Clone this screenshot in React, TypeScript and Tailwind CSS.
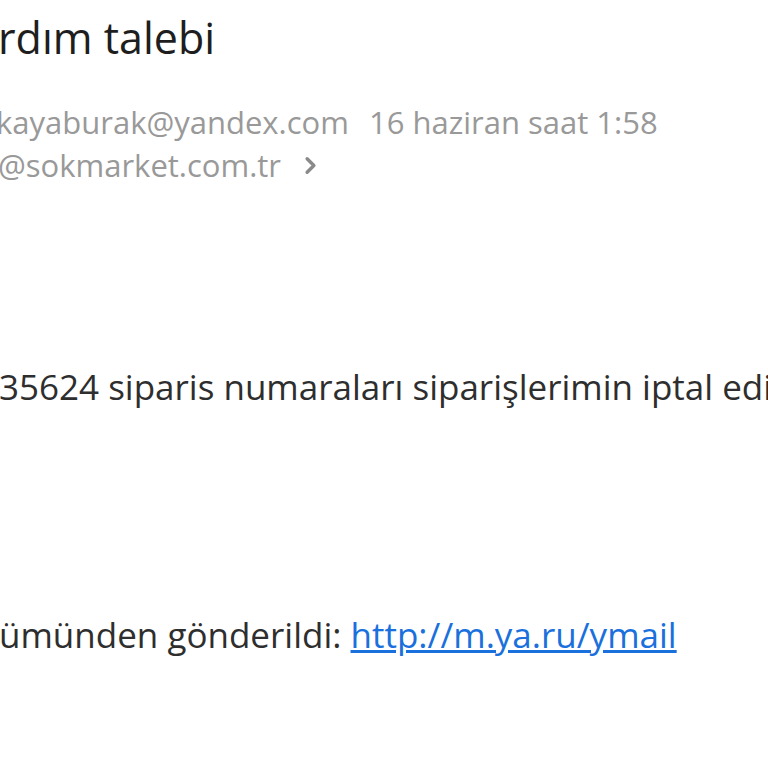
import { ChevronRight } from "lucide-react";

export default function App() {
  return (
    <div
      className="w-[768px] h-[768px] overflow-hidden bg-white"
      style={{ fontFamily: '"Open Sans", "Noto Sans", sans-serif' }}
    >
      <div className="flex flex-col whitespace-nowrap">
        {/* subject */}
        <h1 className="mt-[12px] -ml-[2px] text-[43px] leading-[52px] text-[#1e1e1e] font-normal">
          rdım talebi
        </h1>

        {/* sender / recipient */}
        <div className="mt-[37px] flex flex-col text-[31px] leading-[43px] text-[#999999]">
          <div className="flex items-center -ml-[4px]">
            <span>kayaburak@yandex.com</span>
            <span className="ml-[20px]">16 haziran saat 1:58</span>
          </div>
          <div className="flex items-center -ml-[2px]">
            <span>@sokmarket.com.tr</span>
            <ChevronRight className="ml-[16px] w-[27px] h-[27px] text-[#8a8a8a]" strokeWidth={3} />
          </div>
        </div>

        {/* body */}
        <div className="mt-[180px] text-[35px] leading-[40px] text-[#2e2e2e]">
          <p className="-ml-[1px]">35624 siparis numaraları siparişlerimin iptal edilmesini talep ediyorum.</p>
        </div>

        <div className="mt-[208px] text-[35px] leading-[40px] text-[#2e2e2e]">
          <p className="-ml-[1px]">
            ümünden gönderildi:{" "}
            <a href="#" className="text-[#1a70dc] underline">
              http://m.ya.ru/ymail
            </a>
          </p>
        </div>
      </div>
    </div>
  );
}
